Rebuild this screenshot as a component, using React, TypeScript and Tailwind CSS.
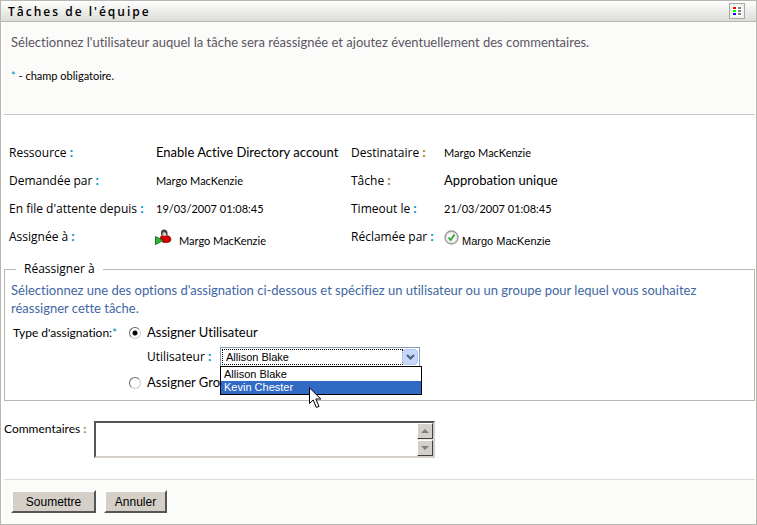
import { useState } from "react"
import type { ReactNode } from "react"

const USERS = ["Allison Blake", "Kevin Chester"]

function ListIcon() {
  return (
    <svg width="10" height="10" viewBox="0 0 10 10" shapeRendering="crispEdges" className="shrink-0" aria-hidden="true">
      <rect width="10" height="10" fill="#fff" />
      <rect x="1" y="1" width="3" height="2" fill="#f00" />
      <rect x="1" y="4" width="3" height="2" fill="#0f0" />
      <rect x="1" y="7" width="3" height="2" fill="#00f" />
      <rect x="6" y="1" width="3" height="2" fill="#808080" />
      <rect x="6" y="4" width="3" height="2" fill="#808080" />
      <rect x="6" y="7" width="3" height="2" fill="#808080" />
    </svg>
  )
}

function AssigneeIcon() {
  return (
    <svg width="17" height="17" viewBox="0 0 17 17" className="-ml-px" aria-hidden="true">
      <path d="M6 6V3.500Q6 .5 9 .5T12.500 3.500V6Z" fill="#444" />
      <path d="M7.500 4Q9 2.500 11 4V6.500L9.500 8 7.500 6.500Z" fill="#d8ccc8" />
      <path d="M5 9.500Q5 7 7.500 6.500L9.500 7.500 12 6.500Q16 7 16 10.500 16 13.500 12 13.500H8Z" fill="#d00000" stroke="#7c1010" strokeWidth=".7" />
      <path d="M.5 7.500V15.500L8 11.500Z" fill="#35b53a" stroke="#17751d" />
    </svg>
  )
}

function ClaimedIcon() {
  return (
    <svg width="15" height="15" viewBox="0 0 15 15" aria-hidden="true">
      <circle cx="7.500" cy="7.500" r="6.500" fill="#e4e4e4" stroke="#999" strokeWidth="1.300" />
      <circle cx="7.500" cy="7.500" r="4.500" fill="#f7f7f7" />
      <path d="M4.500 7.500L6.700 10 10.500 4.500" fill="none" stroke="#2fa82f" strokeWidth="1.800" />
    </svg>
  )
}

function Cursor() {
  return (
    <svg width="13" height="22" viewBox="0 0 13 22" aria-hidden="true">
      <path d="M.5 .8V16.500L4.200 13 7.400 20.500 10 19.300 6.800 12H11.800Z" fill="#fff" stroke="#000" />
    </svg>
  )
}

function Label({ children, colon = "text-[#008fc7]" }: { children: ReactNode; colon?: string }) {
  return (
    <>
      {children} <span className={`font-bold ${colon}`}>:</span>
    </>
  )
}

function ScrollButton({ up }: { up?: boolean }) {
  return (
    <button
      type="button"
      aria-label={up ? "Défiler vers le haut" : "Défiler vers le bas"}
      className="flex h-4 w-4 items-center justify-center border border-t-white border-l-white border-r-[#404040] border-b-[#404040] bg-[#d4d0c8]"
    >
      <svg width="8" height="4" viewBox="0 0 8 4" aria-hidden="true">
        <path d={up ? "M0 4L4 0 8 4Z" : "M0 0H8L4 4Z"} fill="#808080" />
      </svg>
    </button>
  )
}

const largeText = "font-['Lato',sans-serif] text-[13px]"
const smallText = "font-['Lato',sans-serif] text-[11px]"

const radioClass =
  "h-3 w-3 shrink-0 appearance-none rounded-full border border-t-[#666] border-l-[#666] border-r-[#ccc] border-b-[#ccc] bg-white checked:bg-[radial-gradient(circle,#000_2px,#fff_3px)]"

const buttonClass =
  "h-[23px] border-2 border-t-white border-l-white border-r-[#555] border-b-[#555] bg-[#d4d0c8] font-['Liberation_Sans',sans-serif] text-xs leading-4"

export default function App() {
  const [user, setUser] = useState(USERS[0])
  const [type, setType] = useState("user")

  return (
    <main className="border border-[#b8b8b2] bg-white font-['Open_Sans',sans-serif] text-xs text-black [font-variant-ligatures:none]">
      <header className="flex h-[21px] items-center justify-between border-b border-[#b8b8b2] bg-linear-to-b from-white to-[#dcdcd8] pr-[11px] pl-[7px]">
        <h1 className="pt-px text-xs font-semibold tracking-[2px]">Tâches de l'équipe</h1>
        <button type="button" aria-label="Légende" className="flex h-4 w-4 items-center justify-center border border-[#a8a8a4] bg-[#f0f0ee]">
          <ListIcon />
        </button>
      </header>

      <form onSubmit={(e) => e.preventDefault()} className="pr-px pl-[3px]">
        <section className="h-[93px] border-b border-[#c8c8c4] bg-[#fbfbf9] px-[7px] pt-[10px]">
          <p className={`${largeText} leading-5 text-[#5c5663]`}>
            Sélectionnez l'utilisateur auquel la tâche sera réassignée et ajoutez éventuellement des commentaires.
          </p>
          <p className={`${smallText} mt-4 leading-4`}>
            <span className="text-[#008fc7]">*</span> - champ obligatoire.
          </p>
        </section>

        <dl className="mt-6 grid auto-rows-[28px] grid-cols-[147px_195px_93px_1fr] items-center pl-[5px] whitespace-nowrap">
          <dt><Label>Ressource</Label></dt>
          <dd className={largeText}>Enable Active Directory account</dd>
          <dt><Label colon="text-[#a07818]">Destinataire</Label></dt>
          <dd className={smallText}>Margo MacKenzie</dd>
          <dt><Label>Demandée par</Label></dt>
          <dd className={smallText}>Margo MacKenzie</dd>
          <dt><Label colon="text-[#a07818]">Tâche</Label></dt>
          <dd className={largeText}>Approbation unique</dd>
          <dt><Label>En file d'attente depuis</Label></dt>
          <dd className={smallText}>19/03/2007 01:08:45</dd>
          <dt><Label>Timeout le</Label></dt>
          <dd className={smallText}>21/03/2007 01:08:45</dd>
          <dt><Label>Assignée à</Label></dt>
          <dd className={`${smallText} flex items-center gap-[7px]`}>
            <AssigneeIcon />
            <span className="pt-2">Margo MacKenzie</span>
          </dd>
          <dt><Label>Réclamée par</Label></dt>
          <dd className="flex items-center gap-[3px] font-['Liberation_Sans',sans-serif] text-[11px]">
            <ClaimedIcon />
            <span className="pt-2">Margo MacKenzie</span>
          </dd>
        </dl>

        <fieldset className="mt-[10px] h-[140px] border border-[#b8b8b2] px-[6px]">
          <legend className="ml-[5px] px-2 leading-4">Réassigner à</legend>
          <p className={`${largeText} mt-1 leading-[18px] text-[#3f67a3]`}>
            Sélectionnez une des options d'assignation ci-dessous et spécifiez un utilisateur ou un groupe pour lequel vous souhaitez réassigner cette tâche.
          </p>
          <div className="mt-[6px] grid grid-cols-[116px_1fr] pl-[2px]">
            <span className="font-['Lato',sans-serif] leading-5">
              Type d'assignation:<span className="text-[#008fc7]">*</span>
            </span>
            <div role="radiogroup" aria-label="Type d'assignation">
              <label className={`${largeText} flex h-5 items-center gap-[6px]`}>
                <input type="radio" name="type" checked={type === "user"} onChange={() => setType("user")} className={radioClass} />
                Assigner Utilisateur
              </label>
              <div className="mt-1 flex h-5 items-center pl-[18px]">
                <label htmlFor="user" className="w-[73px] leading-4">
                  <Label>Utilisateur</Label>
                </label>
                <div className="relative h-5 w-[200px] border border-[#7f9db9] bg-white p-px">
                  <select
                    id="user"
                    value={user}
                    onChange={(e) => setUser(e.target.value)}
                    className="block h-4 w-[181px] appearance-none border border-dotted border-black bg-white pl-[3px] font-['Liberation_Sans',sans-serif] text-[11px] leading-[14px] outline-none"
                  >
                    {USERS.map((name) => (
                      <option key={name}>{name}</option>
                    ))}
                  </select>
                  <span className="pointer-events-none absolute top-px right-px flex h-4 w-4 items-center justify-center rounded-sm border border-[#b0c5f3] bg-[#c8d8fb]">
                    <svg width="9" height="7" viewBox="0 0 9 7" aria-hidden="true">
                      <path d="M1 1L4.500 4.500 8 1" fill="none" stroke="#4d6185" strokeWidth="2.200" />
                    </svg>
                  </span>
                  <ul
                    role="listbox"
                    aria-label="Utilisateurs"
                    className="absolute top-[18px] -left-px z-10 w-[202px] border border-black bg-white font-['Liberation_Sans',sans-serif] text-[11px] leading-[13px]"
                  >
                    <li role="option" aria-selected="false" className="pt-px pl-[3px]">Allison Blake</li>
                    <li role="option" aria-selected="true" className="bg-[#316ac5] pl-[3px] text-white">Kevin Chester</li>
                  </ul>
                  <span className="pointer-events-none absolute top-[39px] left-[88px] z-20">
                    <Cursor />
                  </span>
                </div>
              </div>
              <label className={`${largeText} mt-[6px] flex h-5 items-center gap-[6px]`}>
                <input type="radio" name="type" checked={type === "group"} onChange={() => setType("group")} className={radioClass} />
                Assigner Groupe
              </label>
            </div>
          </div>
        </fieldset>

        <div className="mt-5 flex items-start">
          <label htmlFor="comments" className="w-[90px] font-['Lato',sans-serif] leading-4 whitespace-nowrap">
            <Label colon="text-[#a07818]">Commentaires</Label>
          </label>
          <div className="flex h-[37px] w-[341px] border-2 border-t-[#555] border-l-[#555] border-r-[#d4d0c8] border-b-[#d4d0c8]">
            <textarea id="comments" className="min-w-0 flex-1 resize-none overflow-hidden outline-none" />
            <div className="flex flex-col justify-between bg-[#eae8e4]">
              <ScrollButton up />
              <ScrollButton />
            </div>
          </div>
        </div>

        <footer className="mt-[21px] flex h-[45px] gap-2 border-t border-[#dcdcd8] bg-[#fbfbf9] pt-[10px] pl-[7px]">
          <button type="submit" className={`${buttonClass} w-[85px]`}>Soumettre</button>
          <button type="button" className={`${buttonClass} w-[63px]`}>Annuler</button>
        </footer>
      </form>
    </main>
  )
}
